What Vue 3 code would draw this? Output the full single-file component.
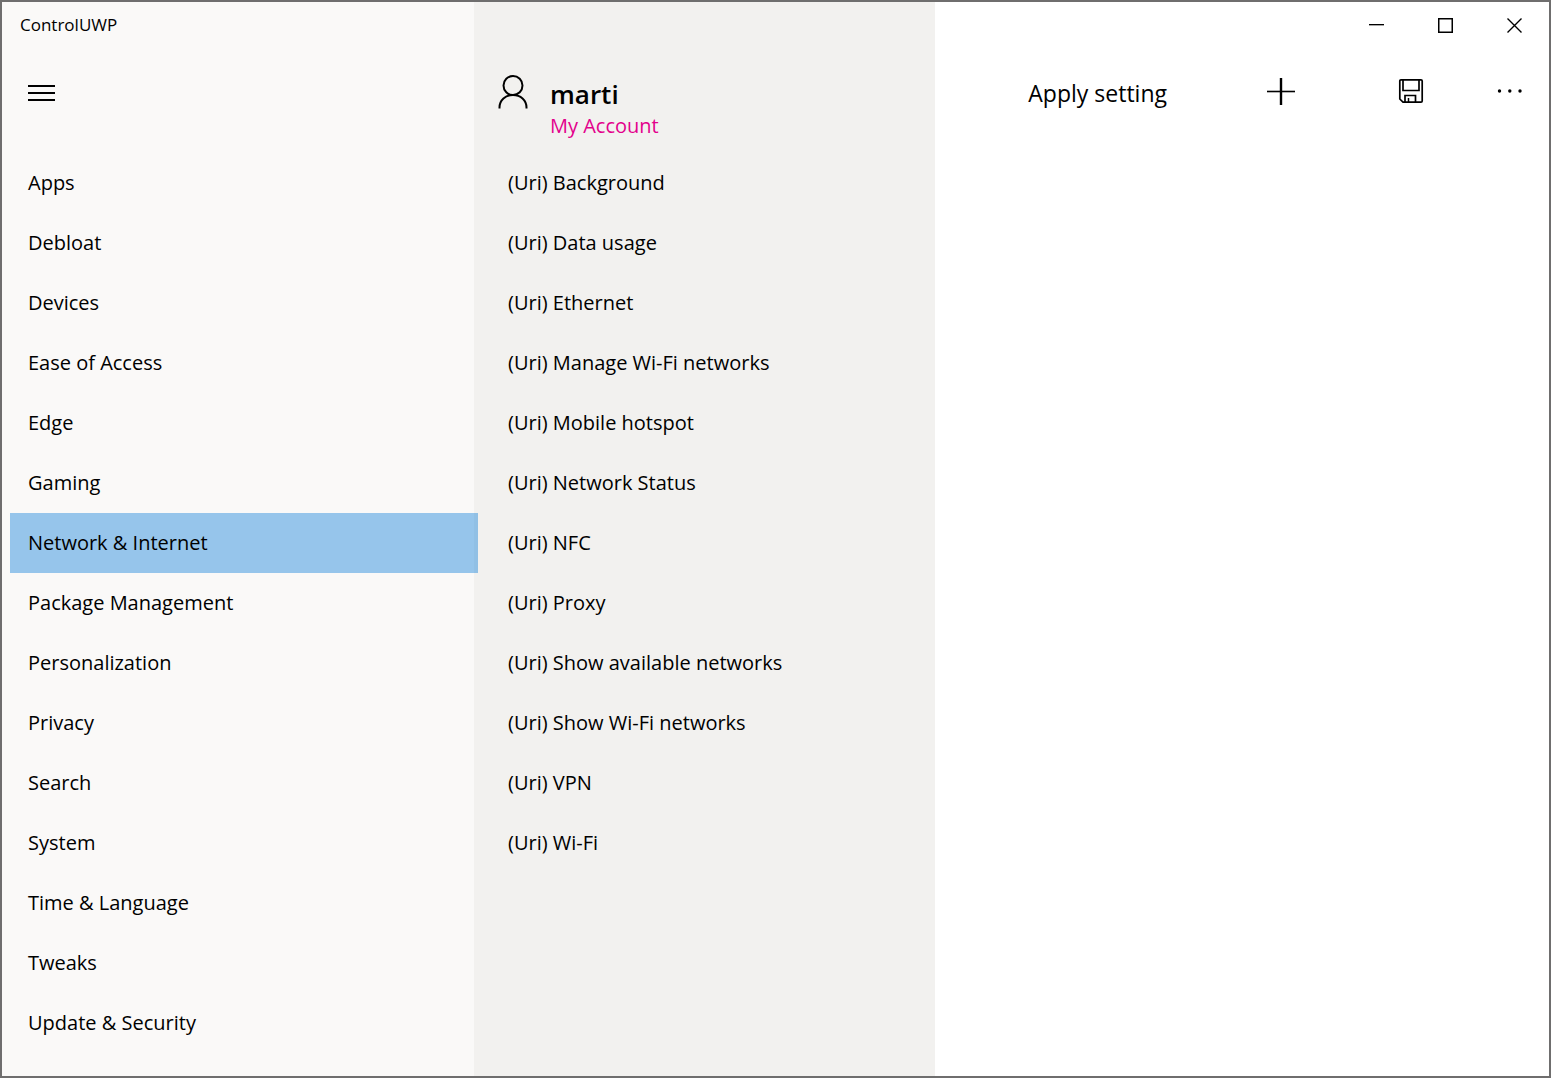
<script setup>
import { ref } from 'vue'

const categories = [
  'Apps', 'Debloat', 'Devices', 'Ease of Access', 'Edge', 'Gaming',
  'Network & Internet', 'Package Management', 'Personalization', 'Privacy',
  'Search', 'System', 'Time & Language', 'Tweaks', 'Update & Security'
]
const settings = [
  'Background', 'Data usage', 'Ethernet', 'Manage Wi-Fi networks',
  'Mobile hotspot', 'Network Status', 'NFC', 'Proxy',
  'Show available networks', 'Show Wi-Fi networks', 'VPN', 'Wi-Fi'
]
const selected = ref('Network & Internet')
</script>

<template>
  <div class="window">
    <nav class="pane sidebar">
      <div class="titlebar">ControlUWP</div>
      <div class="head">
        <button class="icon menu" aria-label="Toggle navigation">
          <svg width="27" height="16" viewBox="0 0 27 16" shape-rendering="crispEdges">
            <path d="M0 0h27v2H0zM0 7h27v2H0zM0 14h27v2H0z" />
          </svg>
        </button>
      </div>
      <ul class="list categories">
        <li v-for="name in categories" :key="name">
          <button class="row" :class="{ selected: name === selected }" @click="selected = name">{{ name }}</button>
        </li>
      </ul>
    </nav>

    <section class="pane details">
      <div class="titlebar"></div>
      <div class="head account">
        <svg class="person" width="30" height="34" viewBox="0 0 30 34" fill="none" stroke="#000" stroke-width="2">
          <circle cx="15" cy="10.500" r="9.500" />
          <path d="M1.500 33.500v-1C1.500 25 7.500 20 15 20s13.500 5 13.500 12.500v1" />
        </svg>
        <div class="who">
          <span class="name">marti</span>
          <a class="link" href="#account">My Account</a>
        </div>
      </div>
      <ul class="list">
        <li v-for="name in settings" :key="name">
          <button class="row">(Uri) {{ name }}</button>
        </li>
      </ul>
    </section>

    <main class="pane content">
      <div class="titlebar controls">
        <button class="caption" aria-label="Minimize">
          <svg width="15" height="15" viewBox="0 0 15 15" shape-rendering="crispEdges"><path d="M0 6h15v1H0z" /><path d="M0 7h15v1H0z" opacity=".35" /></svg>
        </button>
        <button class="caption" aria-label="Maximize">
          <svg width="15" height="15" viewBox="0 0 15 15" fill="none" stroke="#000" stroke-width="1.500"><path d="M.75.75h13.500v13.500H.75z" /></svg>
        </button>
        <button class="caption" aria-label="Close">
          <svg width="15" height="15" viewBox="0 0 15 15" fill="none" stroke="#000" stroke-width="1.400"><path d="M.5.5l14 14M14.500.5l-14 14" /></svg>
        </button>
      </div>
      <div class="head commands">
        <button class="apply">Apply setting</button>
        <button class="icon add" aria-label="Add">
          <svg width="28" height="28" viewBox="0 0 28 28"><path d="M12.800 0h2.400v27h-2.400z" /><path d="M0 12.700h28v1.600H0z" /></svg>
        </button>
        <button class="icon save" aria-label="Save">
          <svg width="24" height="24" viewBox="0 0 24 24" fill="none" stroke="#000" stroke-width="1.700">
            <path d="M2 .8h20q1.200 0 1.200 1.200v20q0 1.200-1.200 1.200H4L.8 20V2Q.8.8 2 .8z" />
            <path d="M4 1v10.500h16V1M6 23v-6.500h10.500V23" />
            <path d="M9.500 19v4" stroke-width="1.500" />
          </svg>
        </button>
        <button class="icon more" aria-label="More">
          <svg width="26" height="4" viewBox="0 0 26 4"><circle cx="2.500" cy="2" r="1.700" /><circle cx="12.800" cy="2" r="1.700" /><circle cx="23" cy="2" r="1.700" /></svg>
        </button>
      </div>
    </main>
  </div>
</template>

<style>
body {
  margin: 0;
}
</style>

<style scoped>
.window {
  box-sizing: border-box;
  display: flex;
  min-height: 100vh;
  border: 2px solid #6f6e6e;
  background: #fff;
  color: #000;
  font-family: "Open Sans", "Noto Sans", sans-serif;
  font-size: 20px;
}

button {
  padding: 0;
  border: 0;
  background: none;
  color: inherit;
  font: inherit;
}

svg {
  display: block;
}

.sidebar {
  flex: 0 1 472px;
  background: #faf9f8;
}

.details {
  flex: 0 1 461px;
  background: #f2f1ef;
}

.content {
  flex: 1 1 614px;
}

.titlebar {
  box-sizing: border-box;
  height: 48px;
  padding-left: 18px;
  font-size: 17px;
  line-height: 46px;
}

.head {
  box-sizing: border-box;
  display: flex;
  height: 103px;
}

.menu {
  align-self: flex-start;
  padding: 35px 26px;
}

.list {
  margin: 0;
  padding: 0;
  list-style: none;
}

.categories {
  position: relative;
  z-index: 1;
  margin: 0 -4px 0 8px;
}

.row {
  display: block;
  box-sizing: border-box;
  width: 100%;
  height: 60px;
  padding: 0 18px;
  line-height: 60px;
  text-align: left;
  white-space: nowrap;
}

.details .row {
  padding-left: 34px;
}

.selected {
  background: rgba(0, 120, 215, 0.4);
}

.account {
  gap: 22px;
  padding: 24px 0 0 24px;
}

.person {
  margin-top: 1px;
}

.who {
  display: flex;
  flex-direction: column;
}

.name {
  font-size: 26px;
  font-weight: 600;
  line-height: 40px;
}

.link {
  color: #e3008c;
  line-height: 24px;
  text-decoration: none;
}

.controls {
  display: flex;
  justify-content: flex-end;
}

.caption {
  display: flex;
  align-items: center;
  justify-content: center;
  width: 69px;
  height: 46px;
}

.commands {
  align-items: flex-start;
  justify-content: flex-end;
  padding-right: 26px;
}

.apply {
  font-size: 23px;
  line-height: 86px;
}

.icon svg {
  overflow: visible;
}

.add {
  padding: 28px 0 0 100px;
}

.save {
  padding: 29px 0 0 104px;
}

.more {
  padding: 39px 0 0 74px;
}
</style>
